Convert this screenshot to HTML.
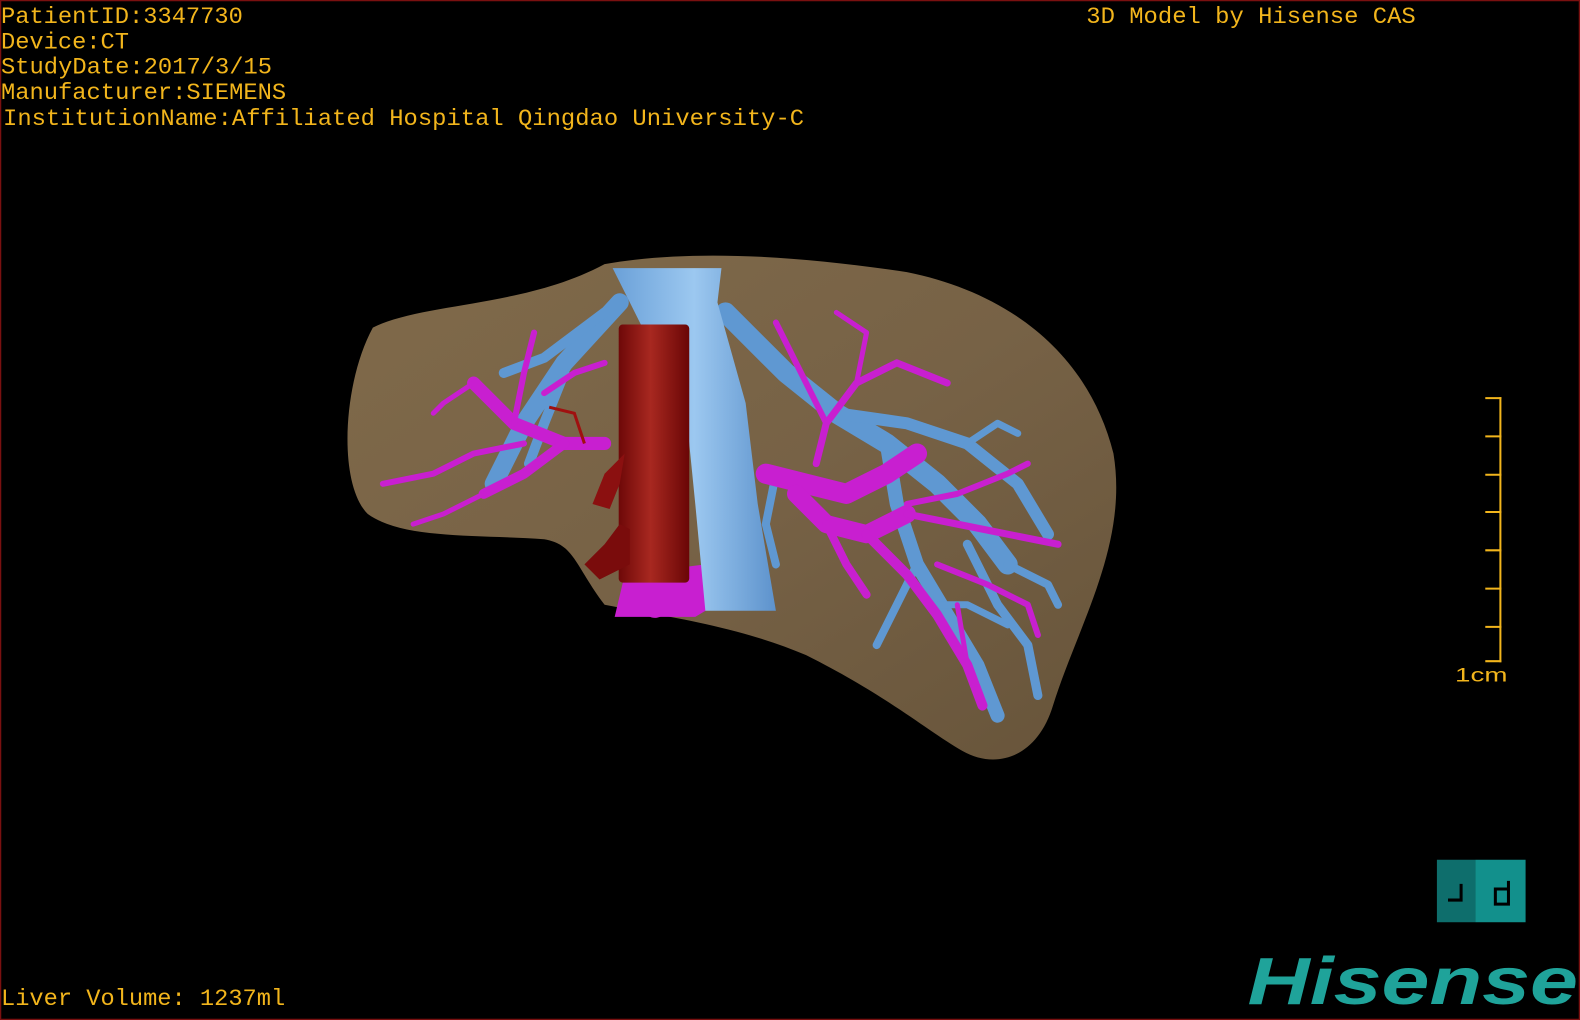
<!DOCTYPE html>
<html><head><meta charset="utf-8"><style>
html,body{margin:0;padding:0;background:#000;width:1580px;height:1020px;overflow:hidden}
svg{display:block}
text{font-family:"Liberation Mono",monospace;fill:#f2b51c}
</style></head><body>
<svg width="1580" height="1020" viewBox="0 0 1568 1012" preserveAspectRatio="none" xmlns="http://www.w3.org/2000/svg">
<defs>
<linearGradient id="lv" x1="0" y1="0" x2="1" y2="1">
<stop offset="0" stop-color="#806a4a"/><stop offset="0.5" stop-color="#776246"/><stop offset="1" stop-color="#67543a"/>
</linearGradient>
<linearGradient id="ivc" x1="0" y1="0" x2="1" y2="0">
<stop offset="0" stop-color="#6aa0d8"/><stop offset="0.5" stop-color="#9cc8f0"/><stop offset="1" stop-color="#5d92cc"/>
</linearGradient>
<linearGradient id="ao" x1="0" y1="0" x2="1" y2="0">
<stop offset="0" stop-color="#6e0808"/><stop offset="0.45" stop-color="#a82820"/><stop offset="1" stop-color="#6a0606"/>
</linearGradient>
</defs>
<rect x="0.5" y="0.5" width="1567" height="1011" fill="#000" stroke="#7a1010" stroke-width="1.5"/>
<!-- liver -->
<path d="M370,325 C420,300 520,305 600,262 C680,248 780,252 900,270 C1000,290 1080,350 1105,450 C1120,540 1070,620 1045,700 C1030,750 990,765 955,745 C920,725 880,690 800,650 C730,620 650,610 600,600 C570,560 570,540 540,535 C470,530 400,535 365,510 C335,480 340,380 370,325 Z" fill="url(#lv)"/>
<!-- blue hepatic veins -->
<g fill="none" stroke="#5f98d2" stroke-linecap="round" stroke-linejoin="round">
<path d="M615,300 L560,360 L520,420 L490,480" stroke-width="18"/>
<path d="M600,310 L540,355 L500,370" stroke-width="10"/>
<path d="M560,370 L540,420 L525,460" stroke-width="10"/>
<path d="M720,310 L780,370 L830,410 L880,440 L930,480 L970,520 L1000,560" stroke-width="20"/>
<path d="M830,410 L900,420 L960,440 L1010,480 L1040,530" stroke-width="12"/>
<path d="M880,440 L890,500 L910,560 L940,610 L970,660 L990,710" stroke-width="14"/>
<path d="M960,540 L990,600 L1020,640 L1030,690" stroke-width="9"/>
<path d="M910,560 L880,620 L870,640" stroke-width="8"/>
<path d="M1000,560 L1040,580 L1050,600" stroke-width="8"/>
<path d="M960,440 L990,420 L1010,430" stroke-width="7"/>
<path d="M930,600 L960,600 L1000,620" stroke-width="7"/>
<path d="M770,470 L760,520 L770,560" stroke-width="8"/>
</g>
<!-- magenta portal veins -->
<g fill="none" stroke="#c81fd0" stroke-linecap="round" stroke-linejoin="round">
<path d="M760,470 L800,480 L840,490 L880,470 L910,450" stroke-width="20"/>
<path d="M790,490 L820,520 L860,530 L900,510" stroke-width="18"/>
<path d="M860,530 L900,570 L930,610 L960,660 L975,700" stroke-width="10"/>
<path d="M820,520 L840,560 L860,590" stroke-width="8"/>
<path d="M900,510 L950,520 L1000,530 L1050,540" stroke-width="7"/>
<path d="M900,500 L950,490 L1000,470 L1020,460" stroke-width="6"/>
<path d="M810,460 L820,420 L850,380 L890,360 L940,380" stroke-width="7"/>
<path d="M820,420 L790,360 L770,320" stroke-width="6"/>
<path d="M850,380 L860,330 L830,310" stroke-width="5"/>
<path d="M930,560 L980,580 L1020,600 L1030,630" stroke-width="6"/>
<path d="M950,600 L960,660 L975,700" stroke-width="5"/>
<path d="M600,440 L560,440 L510,420 L470,380" stroke-width="13"/>
<path d="M560,440 L520,470 L480,490" stroke-width="10"/>
<path d="M520,440 L470,450 L430,470 L380,480" stroke-width="6"/>
<path d="M480,490 L440,510 L410,520" stroke-width="5"/>
<path d="M510,420 L520,370 L530,330" stroke-width="6"/>
<path d="M540,390 L570,370 L600,360" stroke-width="6"/>
<path d="M470,380 L440,400 L430,410" stroke-width="5"/>
<path d="M660,560 L650,600" stroke-width="26"/>
</g>
<path d="M620,570 L700,560 L710,600 L690,612 L610,612 Z" fill="#c81fd0"/>
<!-- IVC -->
<path d="M608,266 L716,266 L712,300 L740,400 L752,500 L770,606 L700,606 L690,500 L680,400 L640,330 Z" fill="url(#ivc)"/>
<!-- aorta -->
<rect x="614" y="322" width="70" height="256" rx="4" fill="url(#ao)"/>
<path d="M620,450 L600,470 L588,500 L605,505 L615,480" fill="#8b1010"/>
<path d="M615,520 L600,540 L580,560 L595,575 L625,560 L625,525 Z" fill="#7a0c0c"/>
<path d="M545,404 L570,410 L580,440" fill="none" stroke="#a01010" stroke-width="3"/>
<!-- text -->
<text x="1" y="23" font-size="23" textLength="240" lengthAdjust="spacingAndGlyphs">PatientID:3347730</text>
<text x="1" y="48" font-size="23" textLength="127" lengthAdjust="spacingAndGlyphs">Device:CT</text>
<text x="1" y="73" font-size="23" textLength="269" lengthAdjust="spacingAndGlyphs">StudyDate:2017/3/15</text>
<text x="1" y="98" font-size="23" textLength="283" lengthAdjust="spacingAndGlyphs">Manufacturer:SIEMENS</text>
<text x="3" y="124" font-size="23" textLength="795" lengthAdjust="spacingAndGlyphs">InstitutionName:Affiliated Hospital Qingdao University-C</text>
<text x="1078" y="23" font-size="23" textLength="327" lengthAdjust="spacingAndGlyphs">3D Model by Hisense CAS</text>
<text x="1" y="997" font-size="23" textLength="282" lengthAdjust="spacingAndGlyphs">Liver Volume: 1237ml</text>
<!-- scale -->
<g stroke="#f2b51c" stroke-width="2">
<line x1="1489" y1="394" x2="1489" y2="657"/>
<line x1="1474" y1="395" x2="1490" y2="395"/>
<line x1="1474" y1="433" x2="1490" y2="433"/>
<line x1="1474" y1="471" x2="1490" y2="471"/>
<line x1="1474" y1="508" x2="1490" y2="508"/>
<line x1="1474" y1="546" x2="1490" y2="546"/>
<line x1="1474" y1="584" x2="1490" y2="584"/>
<line x1="1474" y1="622" x2="1490" y2="622"/>
<line x1="1474" y1="656" x2="1490" y2="656"/>
</g>
<text x="1444" y="676" style="font-family:'Liberation Sans',sans-serif;font-size:19px" textLength="52" lengthAdjust="spacingAndGlyphs">1cm</text>
<!-- orientation box -->
<rect x="1426" y="853" width="38" height="62" fill="#0e6e6c"/>
<rect x="1464" y="853" width="50" height="62" fill="#12908c"/>
<g fill="none" stroke="#000" stroke-width="3">
<path d="M1450,877 L1450,893 L1437,893"/>
<path d="M1497,874 L1497,897 L1484,897 L1484,882 L1497,882"/>
</g>
<text x="1238" y="996" style="font-family:'Liberation Sans',sans-serif;font-weight:bold;font-style:italic;font-size:66px;fill:#1fa39a" textLength="328" lengthAdjust="spacingAndGlyphs">Hisense</text>
</svg>
</body></html>
